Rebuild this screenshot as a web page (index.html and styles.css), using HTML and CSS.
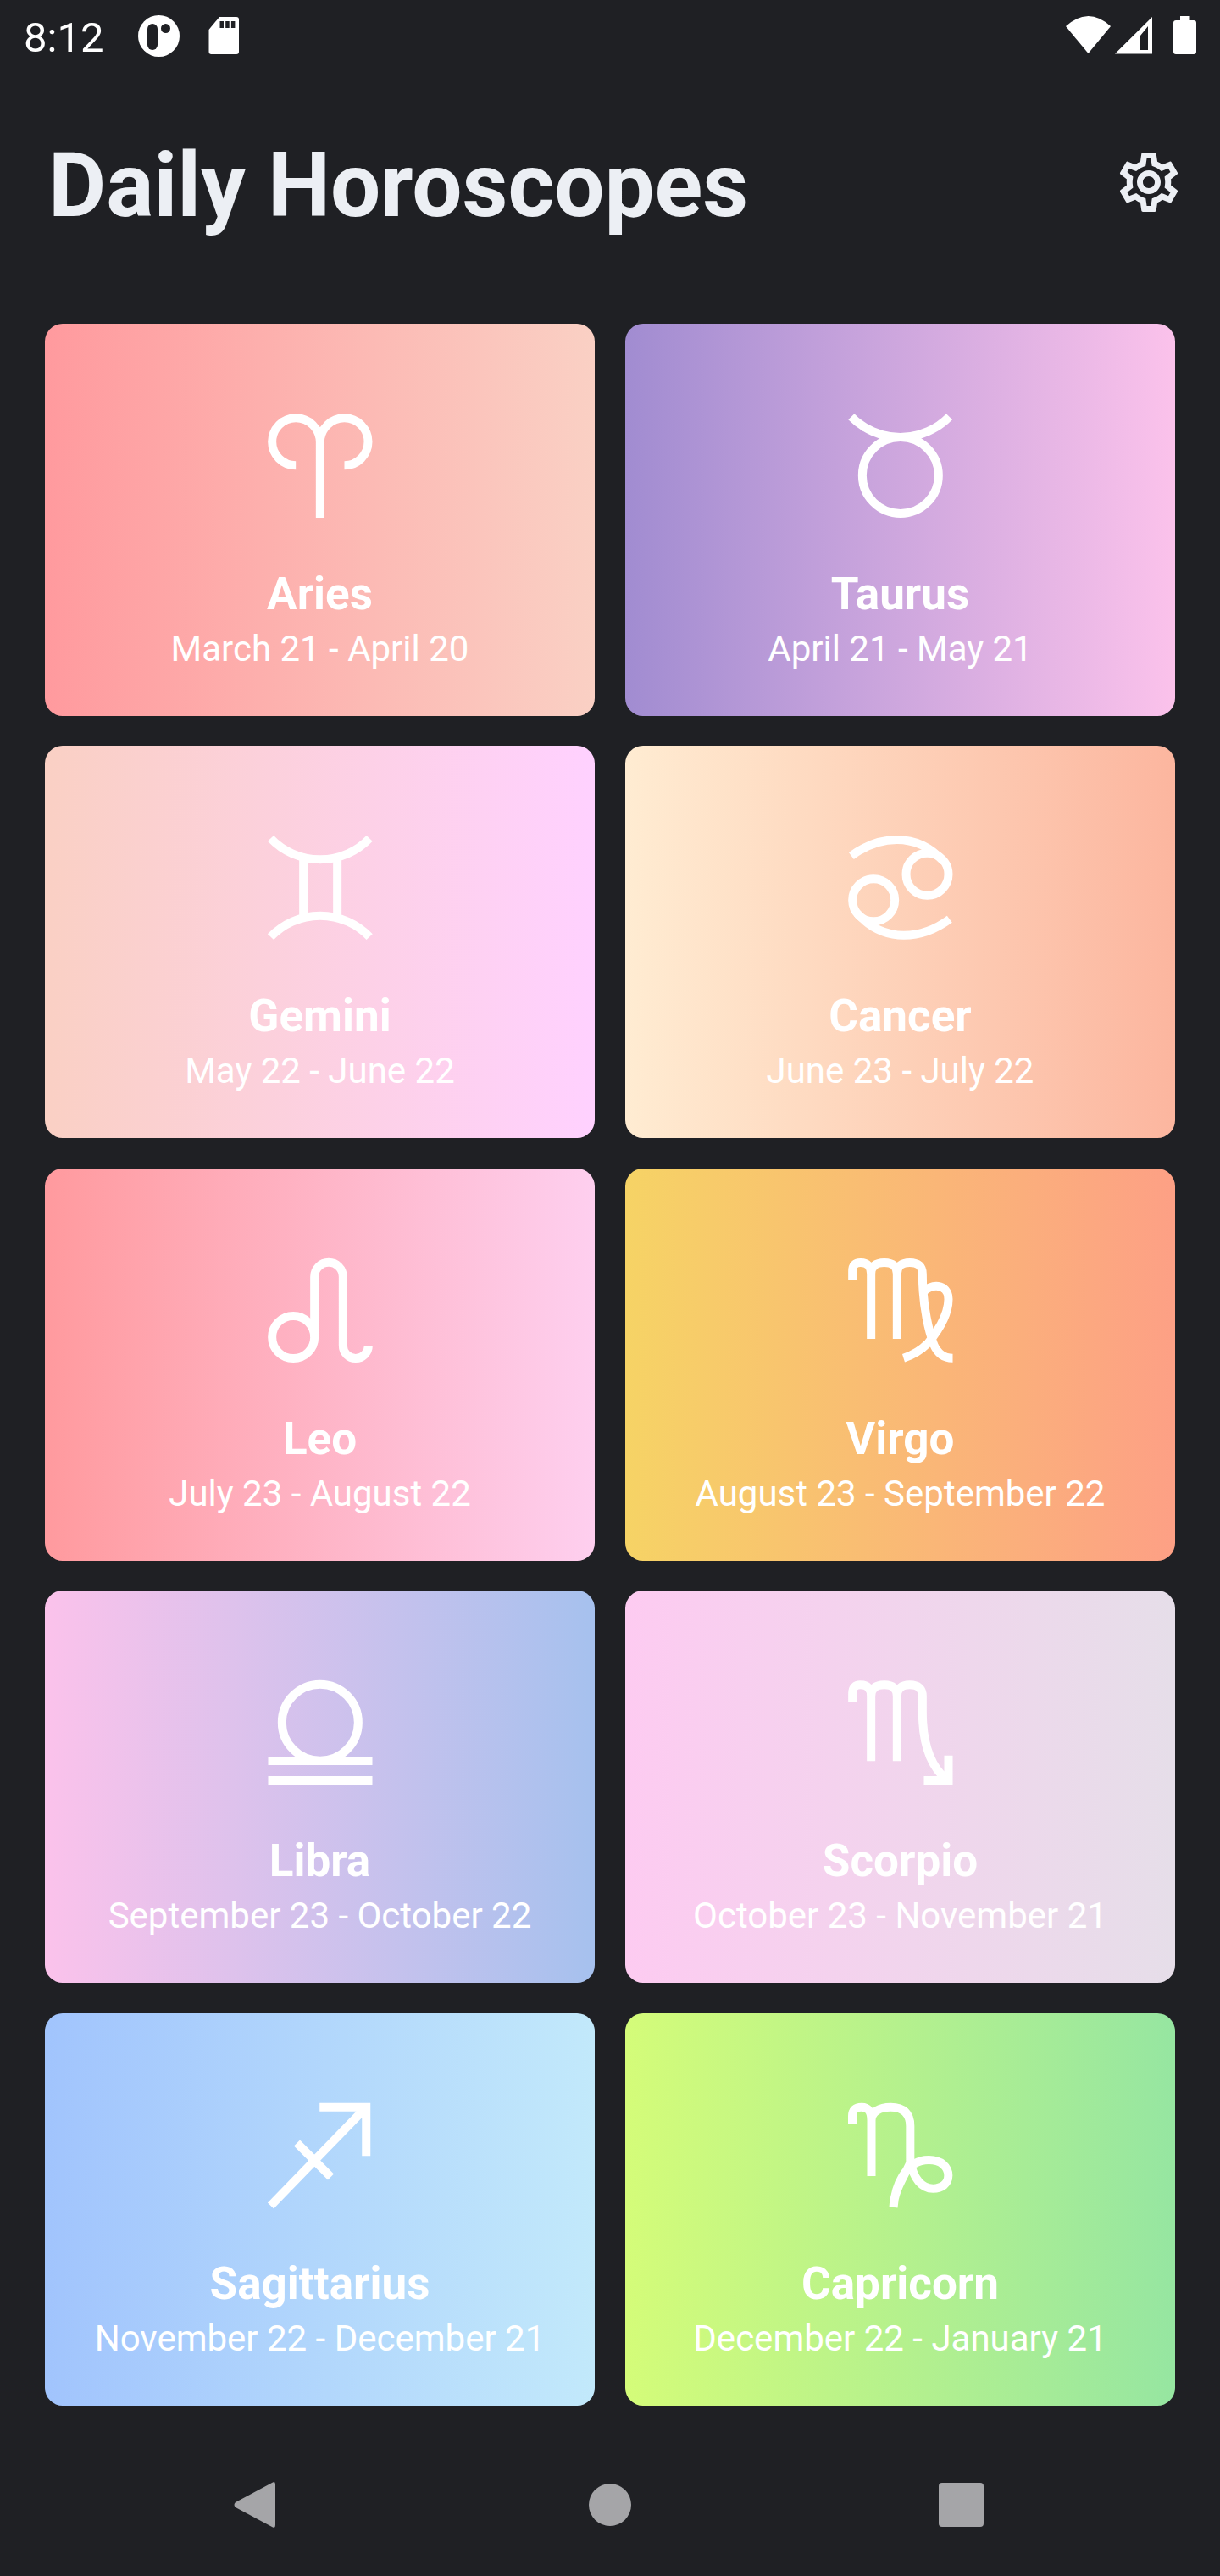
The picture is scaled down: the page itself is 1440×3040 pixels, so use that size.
FILE: index.html
```html
<!DOCTYPE html>
<html lang="en">
<head>
<meta charset="utf-8">
<title>Daily Horoscopes</title>
<link rel="stylesheet" href="styles.css">
</head>
<body>
<div class="screen">
  <div class="status">
    <div class="status-left">
      <span class="time">8:12</span>
      <svg class="status-left-icons" viewBox="163 18 120 50" width="120" height="50">
        <circle cx="187.5" cy="42.5" r="24.5" fill="#fff"/>
        <rect x="174" y="28" width="12" height="31" rx="6" fill="#1f2024"/>
        <circle cx="195.5" cy="33.5" r="5.5" fill="#1f2024"/>
        <path fill="#fff" fill-rule="evenodd" d="M259 20H279Q282 20 282 23V61Q282 64 279 64H249.5Q246.500 64 246.500 61V35ZM259.500 25V33H264V25ZM266.200 25V33H270.700V25ZM272.900 25V33H277.400V25Z"/>
      </svg>
    </div>
    <svg class="status-right-icons" viewBox="1257 18 156 47" width="156" height="47">
      <path fill="#fff" d="M1258 31Q1284.500 7 1311 31L1284.500 63Z"/>
      <path fill="#fff" fill-rule="evenodd" d="M1316 63.500L1360 20V63.500ZM1346 42L1355 31V59H1346Z"/>
      <path fill="#fff" d="M1393 19H1404.500V24H1409Q1412 24 1412 27V61Q1412 64 1409 64H1388Q1385 64 1385 61V27Q1385 24 1388 24H1393Z"/>
    </svg>
  </div>

  <header class="app-header">
    <h1 class="app-title">Daily Horoscopes</h1>
    <svg class="gear" viewBox="0 0 24 24" width="84" height="84"><path d="M19.43 12.98c.04-.32.07-.64.07-.98 0-.34-.03-.66-.07-.98l2.11-1.65c.19-.15.24-.42.12-.64l-2-3.46c-.09-.16-.26-.25-.44-.25-.06 0-.12.01-.17.03l-2.49 1c-.52-.4-1.08-.73-1.69-.98l-.38-2.65C14.46 2.18 14.25 2 14 2h-4c-.25 0-.46.18-.49.42l-.38 2.65c-.61.25-1.17.59-1.69.98l-2.49-1c-.06-.02-.12-.03-.18-.03-.17 0-.34.09-.43.25l-2 3.46c-.13.22-.07.49.12.64l2.11 1.65c-.04.32-.07.65-.07.98 0 .33.03.66.07.98l-2.11 1.65c-.19.15-.24.42-.12.64l2 3.46c.09.16.26.25.44.25.06 0 .12-.01.17-.03l2.49-1c.52.4 1.08.73 1.69.98l.38 2.65c.03.24.24.42.49.42h4c.25 0 .46-.18.49-.42l.38-2.65c.61-.25 1.17-.59 1.69-.98l2.49 1c.06.02.12.03.18.03.17 0 .34-.09.43-.25l2-3.46c.12-.22.07-.49-.12-.64l-2.11-1.65zm-1.98-1.71c.04.31.05.52.05.73 0 .21-.02.43-.05.73l-.14 1.13.89.7 1.08.84-.7 1.21-1.27-.51-1.04-.42-.9.68c-.43.32-.84.56-1.25.73l-1.06.43-.16 1.13-.2 1.35h-1.4l-.19-1.35-.16-1.13-1.06-.43c-.43-.18-.83-.41-1.23-.71l-.91-.7-1.06.43-1.27.51-.7-1.21 1.08-.84.89-.7-.14-1.13c-.03-.31-.05-.54-.05-.74s.02-.43.05-.73l.14-1.13-.89-.7-1.08-.84.7-1.21 1.27.51 1.04.42.9-.68c.43-.32.84-.56 1.25-.73l1.06-.43.16-1.13.2-1.35h1.39l.19 1.35.16 1.13 1.06.43c.43.18.83.41 1.23.71l.91.7 1.06-.43 1.27-.51.7 1.21-1.07.85-.89.7.14 1.13zM12 8c-2.21 0-4 1.79-4 4s1.79 4 4 4 4-1.79 4-4-1.79-4-4-4zm0 6c-1.1 0-2-.9-2-2s.9-2 2-2 2 .9 2 2-.9 2-2 2z"/></svg>
  </header>

  <main class="grid">
    <article class="card aries">
      <svg class="sign" viewBox="172.500 60 420 420"><path d="M296 268A84 84 0 0 1 296 100A86 86 0 0 1 382 184V453M468 268A84 84 0 0 0 468 100A86 86 0 0 0 382 184"/></svg>
      <h2 class="name">Aries</h2><p class="dates">March 21 - April 20</p>
    </article>
    <article class="card taurus">
      <svg class="sign" viewBox="157.500 60 420 420"><path d="M193 95A243 243 0 0 0 540 95"/><circle cx="367" cy="303" r="135"/></svg>
      <h2 class="name">Taurus</h2><p class="dates">April 21 - May 21</p>
    </article>
    <article class="card gemini">
      <svg class="sign" viewBox="172.500 54 420 420"><path d="M207 88A242 242 0 0 0 557 88M207 437A242 242 0 0 1 557 437M323 160V365M443 160V365"/></svg>
      <h2 class="name">Gemini</h2><p class="dates">May 22 - June 22</p>
    </article>
    <article class="card cancer">
      <svg class="sign" viewBox="157.500 54 420 420"><circle cx="462" cy="215" r="75"/><circle cx="272" cy="307" r="75"/><path d="M193 150Q270 93 355 93Q450 93 520 170M541 374Q464 431 379 431Q284 431 214 354"/></svg>
      <h2 class="name">Cancer</h2><p class="dates">June 23 - July 22</p>
    </article>
    <article class="card leo">
      <svg class="sign" viewBox="172.500 51 420 420"><circle cx="287" cy="354" r="75"/><path d="M362 354V140A50.500 50.500 0 0 1 463 140V384A45 45 0 0 0 553 384"/></svg>
      <h2 class="name">Leo</h2><p class="dates">July 23 - August 22</p>
    </article>
    <article class="card virgo">
      <svg class="sign" viewBox="157.500 51 420 420"><path d="M197 150V120Q197 90 225 90Q263 90 263 130V360M263 130Q263 90 310 90Q355 90 355 130V360M355 130Q355 90 400 90Q445 90 445 130C445 250 470 340 485 380C500 415 525 428 552 428M448 195C470 165 537 160 537 220C537 280 490 345 465 375C440 400 410 418 378 428"/></svg>
      <h2 class="name">Virgo</h2><p class="dates">August 23 - September 22</p>
    </article>
    <article class="card libra">
      <svg class="sign" viewBox="172.500 45 420 420"><circle cx="382" cy="218" r="135"/><path d="M198 354H567M198 423H567"/></svg>
      <h2 class="name">Libra</h2><p class="dates">September 23 - October 22</p>
    </article>
    <article class="card scorpio">
      <svg class="sign" viewBox="157.500 45 420 420"><path d="M197 145V115Q197 85 225 85Q263 85 263 125V355M263 125Q263 85 310 85Q355 85 355 125V355M355 125Q355 85 400 85Q445 85 445 125V180C445 290 470 370 530 420M450 423H537V335"/></svg>
      <h2 class="name">Scorpio</h2><p class="dates">October 23 - November 21</p>
    </article>
    <article class="card sagittarius">
      <svg class="sign" viewBox="6 0 420 420"><path d="M213.750 38H378.750V211M378.750 38L40.500 387M133.500 165L253.500 285"/></svg>
      <h2 class="name">Sagittarius</h2><p class="dates">November 22 - December 21</p>
    </article>
    <article class="card capricorn">
      <svg class="sign" viewBox="0 0 420 420"><path d="M39 99V70Q39 38 72 38Q106.500 38 106.500 85V282M106.500 85C106.500 55 135 38 175 38C220 38 244 60 244 105V235C225 280 187 330 184.500 393M184.500 393C190 320 225 225 310 225C355 225 379 250 379 280C379 310 355 326 325 326C285 326 255 290 244 230"/></svg>
      <h2 class="name">Capricorn</h2><p class="dates">December 22 - January 21</p>
    </article>
  </main>

  <nav class="navbar">
    <svg class="nav-back" viewBox="0 0 49 56" width="49" height="56"><path d="M46 1.500Q49 0 49 4V52Q49 56 46 54.500L2 31Q-1 28 2 25Z"/></svg>
    <span class="nav-home"></span>
    <span class="nav-recent"></span>
  </nav>
</div>
</body>
</html>
```
FILE: styles.css
```css
* { box-sizing: border-box; }
html, body { margin: 0; padding: 0; }
body { background: #1f2024; font-family: Roboto, "Liberation Sans", sans-serif; color: #fff; }
.screen { width: 1440px; height: 3040px; display: flex; flex-direction: column; overflow: hidden; }

.status { height: 84px; display: flex; justify-content: space-between; align-items: flex-start; padding: 0 27px 0 28px; flex: none; }
.status-left { display: flex; align-items: flex-start; }
.time { font-size: 49px; line-height: 84px; margin-top: 3px; }
.status-left-icons { margin: 18px 0 0 41px; display: block; }
.status-right-icons { margin-top: 18px; display: block; }

.app-header { height: 298px; flex: none; display: flex; justify-content: space-between; align-items: flex-start; padding: 0 42px 0 57px; }
.app-title { margin: 76px 0 0; font-size: 105px; line-height: 120px; font-weight: 700; color: #eceff4; }
.gear { margin-top: 89px; display: block; fill: #eceff4; }

.grid { display: grid; grid-template-columns: 649px 649px; grid-auto-rows: 463px; column-gap: 36px; row-gap: 35.4px; padding: 0 53px; flex: none; }
.card { border-radius: 21px; display: flex; flex-direction: column; align-items: center; padding-top: 98px; }
.sign { width: 140px; height: 140px; display: block; fill: none; stroke: #fff; stroke-width: 30; flex: none; }
.name { margin: 50px 0 0; font-size: 53px; line-height: 62px; font-weight: 700; }
.dates { margin: 2px 0 0; font-size: 42px; line-height: 64px; font-weight: 400; }

.aries { background: linear-gradient(90deg, #ff9a9e, #fad0c4); }
.taurus { background: linear-gradient(90deg, #a18cd1, #fbc2eb); }
.gemini { background: linear-gradient(90deg, #fad0c4, #ffd1ff); }
.cancer { background: linear-gradient(90deg, #ffecd2, #fcb69f); }
.leo { background: linear-gradient(90deg, #ff9a9e, #fecfef); }
.virgo { background: linear-gradient(90deg, #f6d365, #fda085); }
.libra { background: linear-gradient(90deg, #fbc2eb, #a6c1ee); }
.scorpio { background: linear-gradient(90deg, #fdcbf1, #e6dee9); }
.sagittarius { background: linear-gradient(90deg, #a1c4fd, #c2e9fb); }
.capricorn { background: linear-gradient(90deg, #d4fc79, #96e6a1); }

.navbar { flex: 1; display: flex; align-items: flex-start; padding: 89px 0 0 276px; }
.nav-back { display: block; fill: #a5a5a8; }
.nav-home { width: 50px; height: 50px; border-radius: 50%; background: #a5a5a8; margin: 3px 0 0 370px; }
.nav-recent { width: 53px; height: 52px; border-radius: 4px; background: #a5a5a8; margin: 2px 0 0 363px; }
```
